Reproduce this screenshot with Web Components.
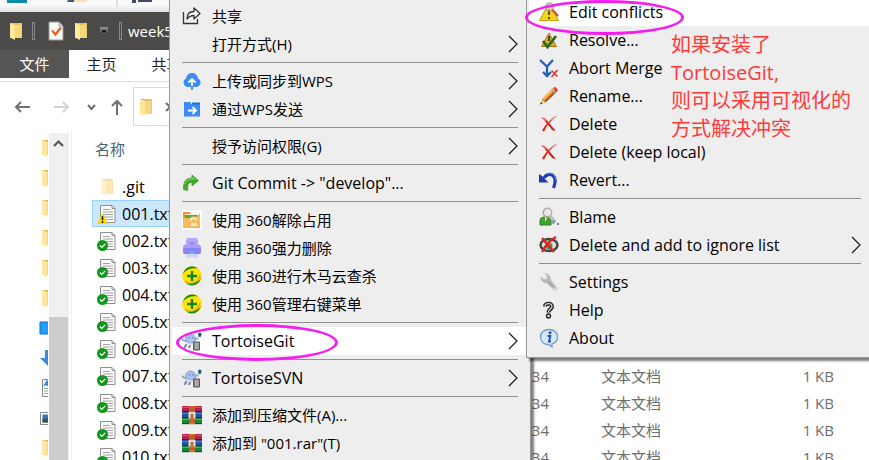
<!DOCTYPE html>
<html lang="zh-CN">
<head>
<meta charset="utf-8">
<title>week5</title>
<style>
    * {
        box-sizing: border-box;
    }
    body {
        margin: 0;
        height: 100vh;
        overflow: hidden;
        position: relative;
        background: #fff;
        color: #000;
        font: 15px/28px "Open Sans", "Noto Sans CJK SC", sans-serif;
    }
    file-explorer {
        height: 100%;
    }
    #main-menu {
        position: absolute;
        top: 0;
        left: 169px;
        width: 362px;
    }
    #git-menu {
        position: absolute;
        top: -4px;
        left: 526px;
        right: -5px;
    }
    note-ring {
        position: absolute;
    }
    #ring-git {
        left: 176px;
        top: 324px;
        width: 162px;
        height: 37px;
    }
    #ring-edit {
        left: 525px;
        top: 0;
        width: 159px;
        height: 35px;
    }
    red-note {
        position: absolute;
        left: 671px;
        top: 31px;
    }
</style>
</head>
<body>

<file-explorer></file-explorer>

<context-menu id="main-menu">
    <menu-item icon="share">共享</menu-item>
    <menu-item arrow>打开方式(H)</menu-item>
    <menu-line></menu-line>
    <menu-item icon="cloud" arrow>上传或同步到WPS</menu-item>
    <menu-item icon="send" arrow>通过WPS发送</menu-item>
    <menu-line></menu-line>
    <menu-item arrow>授予访问权限(G)</menu-item>
    <menu-line></menu-line>
    <menu-item lang="en" icon="commit">Git Commit -&gt; "develop"...</menu-item>
    <menu-line></menu-line>
    <menu-item icon="unlock">使用 360解除占用</menu-item>
    <menu-item icon="shred">使用 360强力删除</menu-item>
    <menu-item icon="safe">使用 360进行木马云查杀</menu-item>
    <menu-item icon="safe">使用 360管理右键菜单</menu-item>
    <menu-line></menu-line>
    <menu-item lang="en" icon="tortoise" arrow active>TortoiseGit</menu-item>
    <menu-line></menu-line>
    <menu-item lang="en" icon="tortoise" arrow>TortoiseSVN</menu-item>
    <menu-line></menu-line>
    <menu-item icon="rar">添加到压缩文件(A)...</menu-item>
    <menu-item icon="rar">添加到 "001.rar"(T)</menu-item>
</context-menu>

<context-menu id="git-menu">
    <menu-item lang="en" icon="conflict" active>Edit conflicts</menu-item>
    <menu-item lang="en" icon="resolve">Resolve...</menu-item>
    <menu-item lang="en" icon="abort">Abort Merge</menu-item>
    <menu-item lang="en" icon="rename">Rename...</menu-item>
    <menu-item lang="en" icon="remove">Delete</menu-item>
    <menu-item lang="en" icon="remove">Delete (keep local)</menu-item>
    <menu-item lang="en" icon="revert">Revert...</menu-item>
    <menu-line></menu-line>
    <menu-item lang="en" icon="blame">Blame</menu-item>
    <menu-item lang="en" icon="ignore" arrow>Delete and add to ignore list</menu-item>
    <menu-line></menu-line>
    <menu-item lang="en" icon="settings">Settings</menu-item>
    <menu-item lang="en" icon="help">Help</menu-item>
    <menu-item lang="en" icon="about">About</menu-item>
</context-menu>

<note-ring id="ring-git"></note-ring>
<note-ring id="ring-edit"></note-ring>
<red-note>如果安装了<br>TortoiseGit,<br>则可以采用可视化的<br>方式解决冲突</red-note>

<script>
// all icons are drawn on a 20x20 grid
const ICONS = {
    share: `<path d="M1.500 6v11.500h14V13" fill="none" stroke="#333" stroke-width="1.300"/>
        <path d="M5 13c0-5 2.500-7.500 7-7.500V2l6 5.500-6 5.500V9.500c-3.500 0-5 1-7 3.500z" fill="#f4f4f4" stroke="#333" stroke-width="1.300" stroke-linejoin="round"/>`,
    cloud: `<path d="M6 16a4.500 4.500 0 0 1-2-8.500C4.500 4 7 2 10 2s5.500 2 6 5.500A4.500 4.500 0 0 1 14 16z" fill="#3b8cf5"/>
        <path d="M10 16V9M6.500 11.500 10 8l3.500 3.500" fill="none" stroke="#fff" stroke-width="1.800"/><path d="M10 15v4" stroke="#3b8cf5" stroke-width="1.800"/>`,
    send: `<path d="M2 3h6l1.500 2H18v12.500H2z" fill="#3b8cf5"/><path d="M10 3.500h8V5.500h-8z" fill="#1f6fe0"/>
        <path d="M6 11.500h8M10.500 8l3.500 3.500-3.500 3.500" fill="none" stroke="#fff" stroke-width="1.800"/>`,
    commit: `<path d="M1.500 16.500C1 8 4.500 5 10 5.200V2l6.500 5.500L10 13V9.500C6 9.300 5.500 12 5.800 17.500z" fill="#3cab22" stroke="#5d8a52" stroke-width=".8"/>
        <path d="M3 11c1-4 4-4.500 8-4.500V4l3 3" fill="none" stroke="#7ed957" stroke-width="1"/>`,
    unlock: `<path d="M0 0h20v20H0z" fill="#fff"/><path d="M1 2h7l1 2h9v14H1z" fill="#e99a2f"/><path d="M3 4h14v5H3z" fill="#fff3d8"/>
        <path d="M3 5h13v3H3z" fill="#58a843"/><path d="M1 8h7l2-1.500h8V18H1z" fill="#f8bd5c"/>
        <path d="M9 12v-1.500a2.500 2.500 0 0 1 5 0" fill="none" stroke="#fff0cf" stroke-width="1.500"/><rect x="8" y="12" width="8" height="5" fill="#ffe5b0" stroke="#f19a35" stroke-width=".8"/>`,
    shred: `<rect x="4" y="0" width="12" height="10" rx="2" fill="#b3a7ff"/><path d="M7 5h6" stroke="#8a7df0" stroke-width="1.500"/>
        <rect x="1" y="6.500" width="18" height="9" rx="3" fill="#a89bfd"/><rect x="1" y="10" width="18" height="6" rx="2" fill="#8f84f5"/>
        <path d="M8 14.500h4" stroke="#48d5ff" stroke-width="1.500"/><path d="M5 16v3M7.500 16v4M10 16v3M12.500 16v4M15 16v3" stroke="#c3b9ff" stroke-width="1.300"/>`,
    safe: `<circle cx="10" cy="10" r="9.800" fill="#ffe500"/><path d="M3 15C7 19 16 18 18 9" fill="none" stroke="#f3a51c" stroke-width="1.500"/>
        <path d="M1 8C3 1 10-1.500 16 2.500 9.500 1.500 4 3.500 1 8z" fill="#158c27"/><path d="M19 12c-2 7-9 9.500-15 5.500C10.500 18.500 16 16.500 19 12z" fill="#158c27"/>
        <path d="M10 5v10M5 10h10" stroke="#168323" stroke-width="2.400"/>`,
    tortoise: `<path d="M4.500 13 2.500 17M8 14l-1 3" stroke="#7f8ca6" stroke-width="2.200"/><path d="M0 8.500l4 2M0 7v3" stroke="#98a4bb" stroke-width="1.600"/>
        <path d="m12.500 9 4-2.500" stroke="#aab6cd" stroke-width="2.600"/>
        <ellipse cx="8.500" cy="7.800" rx="5" ry="4.800" fill="#a6c0f4" stroke="#7f92ba" stroke-width=".8"/>
        <path d="M4 11.500c3 2 7 2 9 0" fill="none" stroke="#d5dcea" stroke-width="1.400"/><path d="M6.500 7h1.500M10 7h1.500" stroke="#5c79b8" stroke-width="1.200"/>
        <ellipse cx="17.800" cy="3.800" rx="1.700" ry="2.300" fill="#1c5a78"/>
        <path d="M11.500 11h6v8h-6z" fill="#8a8a8a" stroke="#5a5a5a"/><path d="M13 13h3.500M13 15h3.500M13 17h3.500" stroke="#ddd" stroke-width=".8"/>`,
    rar: `<path d="M0 1h20v6H0z" fill="#b91f4b"/><path d="M0 7h20v6H0z" fill="#2452a6"/><path d="M0 13h20v6H0z" fill="#168537"/>
        <path d="M0 2.500h20" stroke="#df4d72"/><path d="M0 8.500h20" stroke="#4c82d7"/><path d="M0 14.500h20" stroke="#3db85a"/><path d="M0 6.500h20M0 12.500h20M0 18.700h20" stroke="#222" stroke-width=".8"/>
        <path d="M7 1h6v18H7z" fill="#d9702c"/><path d="M7 3h6M7 5h6M7 16h6" stroke="#8b4320" stroke-width=".8"/>
        <path d="M6.500 7h7v6.500h-2V9h-3v4.500h-2z" fill="#f3eee8" stroke="#8b8583" stroke-width=".5"/>`,
    conflict: `<path d="M10 1 19.500 18.500H.5z" fill="#f6d21c" stroke="#c9a40a" stroke-linejoin="round"/><path d="M10 7v6M10 15v2" stroke="#5d4e13" stroke-width="2"/>
        <circle cx="10.500" cy="5" r="4" fill="#ddd" fill-opacity=".6" stroke="#999" stroke-width="1.200"/><path d="m13.500 8 5.500 6" stroke="#e04a34" stroke-width="2.400"/>`,
    resolve: `<path d="M10 3 17.500 16.500H2.500z" fill="#e6a820" stroke="#a9761b" stroke-linejoin="round"/><path d="M10 6v5" stroke="#332" stroke-width="1.800"/>
        <path d="m4 11 4.500 6L17 6" fill="none" stroke="#24691b" stroke-width="2.600"/>`,
    abort: `<path d="M1 2 8 8.500 14 2M8 8v10M4 14l4 4 4-4" fill="none" stroke="#245fbe" stroke-width="2.300"/>
        <path d="m12.500 12.500 6 6M18.500 12l-6 7" stroke="#e1322e" stroke-width="1.500"/>`,
    rename: `<path d="m1.500 18 2-5.500L14 2l4 3.500L7 16z" fill="#e8842a"/><path d="M3.500 12.500 14 2l1.500 1.500L5 14z" fill="#f7ba60"/>
        <path d="M7 16 18 5.500l-1.500-1.300L5.500 15z" fill="#a9551a"/>
        <path d="m14 2 1.500-1c2 .5 3.500 2 3.500 3.500l-1.500 1.500z" fill="#cc4b40"/><path d="m12.500 3.500 4 3.500" stroke="#aaa" stroke-width="1.500"/>
        <path d="M1.500 18 3 14l3 2.500z" fill="#e9d5af"/><path d="m1 18.500 2.500-1L2 16z" fill="#222"/>`,
    remove: `<path d="M2 3.500C4 3 6 4 8 6.500l8.500 10c-2 .5-3 0-4.500-2L7.500 9C6 7 4.500 5 2 3.500z" fill="#cd2015"/>
        <path d="M18.500 1.500C14 3 8 8.500 3.500 15.500c-.5 1.500.5 2.500 2 1.500C8 11 12.500 5.500 18.500 1.500z" fill="#dc2b1f"/>
        <path d="m3 3.500 4 3.200M17 2.500l-4.500 3.200" stroke="#f09088"/>`,
    revert: `<path d="M5 8C9 1 20 4 14.500 18" fill="none" stroke="#1d3fb0" stroke-width="3.200"/><path d="M0 4l3 2 6.500 6.500H0z" fill="#1d3fb0"/>
        <path d="M8 4c4-2 8.500 0 8.500 6" fill="none" stroke="#5b83de"/>`,
    blame: `<path d="M1 18v-4c0-3 2-4 5-4s6 1 6 4v4z" fill="#3fa52b" stroke="#347a29"/><circle cx="7" cy="6" r="3.500" fill="#e9c09a"/>
        <path d="M6 10v5l2-4z" fill="#fff"/><circle cx="8.500" cy="5.500" r="4.200" fill="#eee" fill-opacity=".8" stroke="#aaa" stroke-width="1.400"/>
        <path d="m11 8.500 6 6.500" stroke="#bbb" stroke-width="2.200"/><circle cx="14" cy="15" r="2" fill="#889bb5"/><path d="M18 17h2" stroke="#456" stroke-width="1.500"/>`,
    ignore: `<ellipse cx="10" cy="10" rx="8.500" ry="6" fill="#ddd" stroke="#444" stroke-width="2.400"/><circle cx="10" cy="11" r="3.500" fill="#479a50"/>
        <path d="m3 3 12 14M17 2C11 5 6 11 3 17" fill="none" stroke="#d9251d" stroke-width="2.400"/>`,
    settings: `<path d="M2 4.500 5 7.500 8 6.500 7.500 3 5 1.500c4-.5 7 2 6.500 6l6 7.500c1 2-1 4-3 2.500l-7-6.500C4.500 11.500 1.500 8.500 2 4.500z" fill="#b9b9b9" stroke="#ccc" stroke-width=".6"/>
        <circle cx="15.500" cy="16" r="1" fill="#eee"/><path d="m9 10 6.500 5.500" stroke="#929292"/>`,
    help: `<path d="M6 6.500C6 3 13 2.500 13 6.500c0 2.500-3.500 2.500-3.500 6" fill="none" stroke="#222" stroke-width="4"/><path d="M6 6.500C6 3 13 2.500 13 6.500c0 2.500-3.500 2.500-3.500 5.500" fill="none" stroke="#ddd" stroke-width="1.200"/>
        <circle cx="9.500" cy="16" r="2" fill="#ddd" stroke="#222" stroke-width="1.300"/>`,
    about: `<path d="M10 1.500c5 0 8.500 3 8.500 7.500 0 3.500-2.500 6-5.500 7v3l-3.500-2.500C5 16.500 1.500 13.500 1.500 9S5 1.500 10 1.500z" fill="#d4e8fa" stroke="#769bc7" stroke-width="1.300"/>
        <circle cx="11" cy="4.800" r="1.500" fill="#1d52b5"/><path d="M8.500 8h2.800L10 13.500h2" fill="none" stroke="#1d52b5" stroke-width="1.900"/>`,
    folder: `<path d="M4 2h11v15H4z" fill="#e9bd55"/><path d="M13 2h3v15h-3z" fill="#efc968"/><path d="M4 2l5 2v15l-5-2.500z" fill="#ffe79e"/><path d="M9 4h6v13H9z" fill="#f7d67d"/>`,
    check: `<path d="M3 1h10l4 4v14H3z" fill="#fafafa" stroke="#999"/><path d="M13 1v4h4" fill="#ddd" stroke="#888" stroke-width=".8"/><path d="m6 9.500 3.500 4L15 6.500" fill="none" stroke="#f05a1a" stroke-width="2.200"/>`,
    txt: `<path d="M3.500 1.500H15l3 3v14H3.500z" fill="#fafafa" stroke="#8f8f8f"/><path d="M15 1.500v3h3" fill="none" stroke="#8f8f8f"/>
        <path d="M6 5.500h7M6 8h10M6 10.500h10M6 13h10M6 15.500h10" stroke="#a5a5a5"/>`,
    desktop: `<path d="M2 4h18v12H2z" fill="#1e9fff" stroke="#0b6fc2"/>`,
    download: `<path d="M2 10h16l-8 8z" fill="#3b8ade"/><path d="M7 2h6v9H7z" fill="#3b8ade"/>`,
    doc: `<path d="M4.500 1.500H18v17H4.500z" fill="#fff" stroke="#888"/><path d="m6 8 3-5 1 5M6.500 6.500h3.500" fill="none" stroke="#1b82d4" stroke-width="1.300"/><path d="M6 10.500h8M6 13h8M6 15.500h8" stroke="#8aa"/>`,
    picture: `<path d="M2.500 4.500H20v12H2.500z" fill="#fff" stroke="#888"/><path d="M4.500 6.500H20v8H4.500z" fill="#3a74c4"/><path d="M4.500 11c3-2 5 1 12 0v3.500h-12z" fill="#2f5c4a"/>`
};

const svg = (name) => `<svg viewBox="0 0 20 20" width="20" height="20" aria-hidden="true">${ICONS[name] || ""}</svg>`;

const BASE = `
    * {
        box-sizing: border-box;
        margin: 0;
        padding: 0;
    }
    :host {
        display: block;
    }
    svg {
        display: block;
        flex: none;
    }
    button {
        border: 0;
        background: none;
        font: inherit;
        color: inherit;
    }`;

class ContextMenu extends HTMLElement {
    constructor() {
        super();
        this.attachShadow({mode: "open"}).innerHTML = `
        <style>
        ${BASE}
        :host {
            padding: 2px;
            padding-bottom: 5px;
            background: #eee;
            border: solid #979797;
            border-width: 0 1px 1px;
            box-shadow: 3px 3px 2px rgba(0, 0, 0, 0.5);
        }
        </style>
        <div role="menu"><slot></slot></div>`;
    }
}

class MenuItem extends HTMLElement {
    constructor() {
        super();
        this.attachShadow({mode: "open"});
    }

    connectedCallback() {
        this.shadowRoot.innerHTML = `
        <style>
        ${BASE}
        :host([lang="en"]) {
            font-size: 16px;
        }
        button {
            display: flex;
            align-items: center;
            gap: 10px;
            width: 100%;
            height: 28px;
            padding: 0 10px;
            text-align: left;
            white-space: nowrap;
        }
        :host([active]) button {
            background: #fff;
        }
        .label {
            flex: 1;
        }
        </style>
        <button role="menuitem">
            ${svg(this.getAttribute("icon"))}
            <span class="label"><slot></slot></span>
            ${this.hasAttribute("arrow") ? `<svg width="10" height="18" viewBox="0 0 10 18" aria-hidden="true"><path d="M1 1l8 8-8 8" fill="none" stroke="#1a1a1a" stroke-width="1.200"/></svg>` : ""}
        </button>`;
    }
}

class MenuLine extends HTMLElement {
    constructor() {
        super();
        this.attachShadow({mode: "open"}).innerHTML = `
        <style>
        ${BASE}
        :host {
            padding: 4px 10px;
        }
        div {
            height: 1px;
            background: #919191;
        }
        </style>
        <div role="separator"></div>`;
    }
}

class NoteRing extends HTMLElement {
    constructor() {
        super();
        this.attachShadow({mode: "open"}).innerHTML = `
        <style>
        :host {
            display: block;
            box-sizing: border-box;
            border: 3px solid #f51df0;
            border-radius: 50%;
            pointer-events: none;
        }
        </style>`;
    }
}

class RedNote extends HTMLElement {
    constructor() {
        super();
        this.attachShadow({mode: "open"}).innerHTML = `
        <style>
        :host {
            display: block;
            color: #ff3a3a;
            font-size: 20px;
            line-height: 28px;
            white-space: nowrap;
        }
        </style>
        <p style="margin: 0"><slot></slot></p>`;
    }
}

class NavPane extends HTMLElement {
    constructor() {
        super();
        const items = ["folder", "folder", "folder", "folder", "folder", "folder", "desktop", "download", "doc", "picture", "folder"];
        this.attachShadow({mode: "open"}).innerHTML = `
        <style>
        ${BASE}
        :host {
            display: flex;
            width: 72px;
            border-right: 1px solid #f0f0f0;
            overflow: hidden;
        }
        ul {
            list-style: none;
            width: 49px;
            padding: 2px 0 0 38px;
            overflow: hidden;
        }
        li {
            display: flex;
            align-items: center;
            width: 10px;
            height: 30px;
            overflow: hidden;
        }
        .bar {
            display: flex;
            flex-direction: column;
            width: 20px;
            margin-top: 2px;
            background: #f0f0f0;
        }
        .bar button {
            height: 20px;
            padding: 0 4px;
        }
        .thumb {
            flex: 1;
            margin: 164px 1px 0 0;
            background: #cdcdcd;
        }
        </style>
        <ul>${items.map((name) => `<li>${svg(name)}</li>`).join("")}</ul>
        <div class="bar">
            <button aria-label="向上滚动"><svg width="11" height="8" viewBox="0 0 11 8"><path d="M1 7l4.500-4.500L10 7" fill="none" stroke="#555" stroke-width="2.200"/></svg></button>
            <div class="thumb"></div>
        </div>`;
    }
}

const FILES = [
    {name: ".git", state: "folder"},
    {name: "001.txt", state: "conflict"},
    {name: "002.txt"},
    {name: "003.txt"},
    {name: "004.txt"},
    {name: "005.txt"},
    {name: "006.txt"},
    {name: "007.txt", date: "34", type: "文本文档", size: "1 KB"},
    {name: "008.txt", date: "34", type: "文本文档", size: "1 KB"},
    {name: "009.txt", date: "34", type: "文本文档", size: "1 KB"},
    {name: "010.txt", date: "34", type: "文本文档", size: "1 KB"}
];

class FileList extends HTMLElement {
    constructor() {
        super();
        this.attachShadow({mode: "open"}).innerHTML = `
        <style>
        ${BASE}
        table {
            width: 100%;
            table-layout: fixed;
            border-collapse: separate;
            border-spacing: 0;
            line-height: 24px;
        }
        th {
            height: 42px;
            padding: 0 3px 6px;
            text-align: left;
            font-weight: normal;
            color: #4c607a;
        }
        td {
            height: 27px;
            color: #6d6d6d;
            white-space: nowrap;
        }
        .name {
            display: flex;
            align-items: center;
            gap: 5px;
            padding-left: 5px;
            color: #000;
            font-size: 16px;
        }
        .icon {
            position: relative;
        }
        .badge {
            position: absolute;
            left: 0;
            bottom: 0;
        }
        tr.conflict td {
            background: #cce8ff;
            border: solid #99d1ff;
            border-width: 1px 0;
        }
        tr.conflict td:first-child {
            border-left-width: 1px;
        }
        tr.conflict .name {
            padding-left: 4px;
        }
        tr.folder svg {
            opacity: 0.55;
        }
        .date {
            text-align: right;
            padding-right: 8px;
        }
        .type {
            padding-left: 44px;
        }
        .size {
            text-align: right;
            padding-right: 8px;
        }
        </style>
        <table>
            <colgroup><col style="width: 372px"><col style="width: 93px"><col style="width: 140px"><col></colgroup>
            <thead><tr><th>名称</th><th></th><th></th><th></th></tr></thead>
            <tbody>${FILES.map((file) => this.row(file)).join("")}</tbody>
        </table>`;
    }

    row({name, state = "normal", date = "", type = "", size = ""}) {
        let badge = "";
        if (state === "conflict") {
            badge = `<path d="M5 0 10 10H0z" fill="#ffd800"/><path d="M5 3v3.500M5 7.500V9" stroke="#111" stroke-width="1.300"/>`;
        } else if (state === "normal") {
            badge = `<circle cx="5" cy="5" r="5" fill="#12961b"/><path d="m2.700 5 1.700 1.700L7.500 3.500" fill="none" stroke="#fff" stroke-width="1.200"/>`;
        }
        return `
        <tr class="${state}">
            <td><div class="name">
                <span class="icon">${svg(state === "folder" ? "folder" : "txt")}
                ${badge && `<svg class="badge" width="11" height="11" viewBox="0 0 10 10">${badge}</svg>`}</span>
                <span>${name}</span>
            </div></td>
            <td class="date">${date}</td>
            <td class="type">${type}</td>
            <td class="size">${size}</td>
        </tr>`;
    }
}

class FileExplorer extends HTMLElement {
    constructor() {
        super();
        this.attachShadow({mode: "open"}).innerHTML = `
        <style>
        ${BASE}
        :host {
            display: flex;
            flex-direction: column;
        }
        .behind {
            height: 12px;
            background: linear-gradient(#fafafa 40%, #e2e2e2);
        }
        .title {
            display: flex;
            align-items: center;
            height: 38px;
            padding-left: 6px;
            background: #4c4a48;
            color: #fff;
            white-space: nowrap;
        }
        .title i {
            flex: none;
            width: 3px;
            height: 18px;
            border: 1px solid #8a8886;
        }
        .tabs {
            display: flex;
            height: 32px;
            border-bottom: 1px solid #dcdcdc;
        }
        .tabs button {
            width: 65px;
            height: 28px;
            color: #222;
            line-height: 28px;
        }
        .tabs .file {
            width: 69px;
            background: #575553;
            color: #fff;
        }
        .nav {
            display: flex;
            align-items: center;
            height: 49px;
            padding-left: 14px;
        }
        .address {
            display: flex;
            flex: 1;
            align-items: center;
            height: 39px;
            gap: 9px;
            padding-left: 2px;
            border: 1px solid #d9d9d9;
        }
        .line {
            fill: none;
            stroke: #707070;
            stroke-width: 2;
        }
        .body {
            display: flex;
            flex: 1;
            min-height: 0;
        }
        file-list {
            flex: 1;
            padding: 0 27px 0 20px;
            overflow: hidden;
        }
        </style>
        <div class="behind"><svg width="160" height="7" viewBox="0 0 160 7">
            <path d="M7 0h20v3H7z" fill="#0c8ba5"/><path d="M68 0h6v2h-7z" fill="#4c5873"/><path d="M74 0h13v2H74z" fill="#f6e2b6"/>
            <path d="M116 0h2v7h-2z" fill="#dedede"/><path d="M132 0h4v3h-4zM138 0h14v2h-14z" fill="#414b68"/></svg></div>
        <div class="title">
            ${svg("folder")}<i style="margin: 0 11px 0 6px"></i>${svg("check")}<span style="margin-left: 5px">${svg("folder")}</span>
            <svg width="8" height="8" viewBox="0 0 8 8" style="margin: 0 11px 0 9px"><path d="M0 1h8" stroke="#ccc"/><path d="M0 3h8L4 7z" fill="#000" stroke="#bbb" stroke-width=".6"/></svg>
            <i style="margin-right: 6px"></i><span>week5</span>
        </div>
        <div class="tabs">
            <button class="file">文件</button>
            <button>主页</button>
            <button>共享</button>
        </div>
        <div class="nav">
            <button aria-label="后退"><svg class="line" width="17" height="14" viewBox="0 0 17 14"><path d="M16 7H2M7 2L2 7l5 5"/></svg></button>
            <button aria-label="前进" style="margin-left: 23px; opacity: 0.3"><svg class="line" width="17" height="14" viewBox="0 0 17 14"><path d="M0 7h14M9 2l5 5-5 5"/></svg></button>
            <button aria-label="最近" style="margin-left: 16px"><svg class="line" width="9" height="8" viewBox="0 0 9 8"><path d="M1 2l3.500 4L8 2"/></svg></button>
            <button aria-label="上移" style="margin: 0 10px 0 15px"><svg class="line" width="12" height="16" viewBox="0 0 12 16"><path d="M6 16V2M1 7l5-5 5 5"/></svg></button>
            <div class="address">${svg("folder")}<svg class="line" width="7" height="12" viewBox="0 0 7 12"><path d="M1 2l4 4-4 4"/></svg></div>
        </div>
        <div class="body">
            <nav-pane></nav-pane>
            <file-list></file-list>
        </div>`;
    }
}

customElements.define("context-menu", ContextMenu);
customElements.define("menu-item", MenuItem);
customElements.define("menu-line", MenuLine);
customElements.define("note-ring", NoteRing);
customElements.define("red-note", RedNote);
customElements.define("nav-pane", NavPane);
customElements.define("file-list", FileList);
customElements.define("file-explorer", FileExplorer);
</script>
</body>
</html>
